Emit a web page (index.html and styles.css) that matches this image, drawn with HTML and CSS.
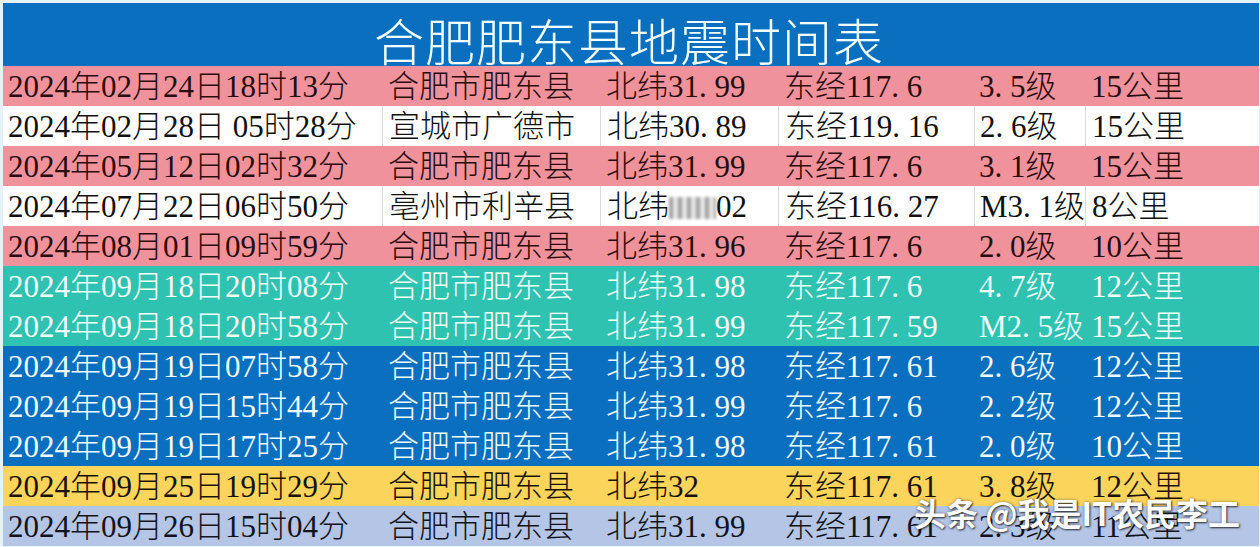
FILE: index.html
```html
<!DOCTYPE html>
<html lang="zh">
<head>
<meta charset="utf-8">
<title>合肥肥东县地震时间表</title>
<link rel="stylesheet" href="styles.css">
</head>
<body>
<div class="sheet">
  <div class="title">合肥肥东县地震时间表</div>

  <div class="row pink">
    <span>2024年02月24日18时13分</span><span>合肥市肥东县</span><span>北纬31<i>.</i>99</span><span>东经117<i>.</i>6</span><span>3<i>.</i>5级</span><span>15公里</span>
  </div>
  <div class="row white">
    <span>2024年02月28日 05时28分</span><span>宣城市广德市</span><span>北纬30<i>.</i>89</span><span>东经119<i>.</i>16</span><span>2<i>.</i>6级</span><span>15公里</span>
  </div>
  <div class="row pink">
    <span>2024年05月12日02时32分</span><span>合肥市肥东县</span><span>北纬31<i>.</i>99</span><span>东经117<i>.</i>6</span><span>3<i>.</i>1级</span><span>15公里</span>
  </div>
  <div class="row white">
    <span>2024年07月22日06时50分</span><span>亳州市利辛县</span><span>北纬<b class="blur"></b>02</span><span>东经116<i>.</i>27</span><span>M3<i>.</i>1级</span><span>8公里</span>
  </div>
  <div class="row pink">
    <span>2024年08月01日09时59分</span><span>合肥市肥东县</span><span>北纬31<i>.</i>96</span><span>东经117<i>.</i>6</span><span>2<i>.</i>0级</span><span>10公里</span>
  </div>
  <div class="row teal">
    <span>2024年09月18日20时08分</span><span>合肥市肥东县</span><span>北纬31<i>.</i>98</span><span>东经117<i>.</i>6</span><span>4<i>.</i>7级</span><span>12公里</span>
  </div>
  <div class="row teal">
    <span>2024年09月18日20时58分</span><span>合肥市肥东县</span><span>北纬31<i>.</i>99</span><span>东经117<i>.</i>59</span><span>M2<i>.</i>5级</span><span>15公里</span>
  </div>
  <div class="row blue">
    <span>2024年09月19日07时58分</span><span>合肥市肥东县</span><span>北纬31<i>.</i>98</span><span>东经117<i>.</i>61</span><span>2<i>.</i>6级</span><span>12公里</span>
  </div>
  <div class="row blue">
    <span>2024年09月19日15时44分</span><span>合肥市肥东县</span><span>北纬31<i>.</i>99</span><span>东经117<i>.</i>6</span><span>2<i>.</i>2级</span><span>12公里</span>
  </div>
  <div class="row blue">
    <span>2024年09月19日17时25分</span><span>合肥市肥东县</span><span>北纬31<i>.</i>98</span><span>东经117<i>.</i>61</span><span>2<i>.</i>0级</span><span>10公里</span>
  </div>
  <div class="row yellow">
    <span>2024年09月25日19时29分</span><span>合肥市肥东县</span><span>北纬32</span><span>东经117<i>.</i>61</span><span>3<i>.</i>8级</span><span>12公里</span>
  </div>
  <div class="row lavender">
    <span>2024年09月26日15时04分</span><span>合肥市肥东县</span><span>北纬31<i>.</i>99</span><span>东经117<i>.</i>61</span><span>2<i>.</i>3级</span><span>11公里</span>
  </div>
</div>
<div class="watermark">头条 @我是IT农民李工</div>
</body>
</html>
```

FILE: styles.css
```css
html, body {
  margin: 0;
  padding: 0;
}

body {
  width: 1260px;
  height: 547px;
  overflow: hidden;
  background: #e4f2f9;
  position: relative;
  font-family: "Liberation Serif", "Noto Sans CJK SC", serif;
}

.sheet {
  margin: 3px 0 0 3px;
  width: 1256px;
  display: flex;
  flex-direction: column;
}

.title {
  height: 63px;
  background: #0a6fbf;
  color: #f2ffff;
  font-family: "Noto Sans CJK SC", sans-serif;
  font-weight: 300;
  font-size: 50px;
  line-height: 63px;
  text-align: center;
  letter-spacing: 1px;
  padding-top: 5px;
  padding-right: 4px;
  box-sizing: border-box;
}

.row {
  height: 40px;
  display: grid;
  grid-template-columns: 379px 218px 178px 196px 111px 174px;
  align-items: center;
  font-size: 31px;
  font-weight: 300;
  line-height: 40px;
  white-space: nowrap;
}

.row span {
  padding-left: 5px;
  padding-top: 1px;
  height: 40px;
  overflow: hidden;
  box-sizing: border-box;
}

.row span:nth-child(2),
.row span:nth-child(3),
.row span:nth-child(4),
.row span:nth-child(6) {
  padding-left: 6px;
}

.row i {
  font-style: normal;
  display: inline-block;
  width: 0.5em;
}

.pink { background: #ef929c; color: #2a0c0c; }
.white { background: #ffffff; color: #111111; }
.teal { background: #30c2b1; color: #f2fffd; }
.blue { background: #0a6fbf; color: #eefcff; }
.yellow { background: #fbd45c; color: #1a1206; }
.lavender { background: #b4c5e6; color: #101420; }

.white span + span {
  border-left: 1px solid #dcdcdc;
}

.blur {
  display: inline-block;
  width: 47px;
  height: 22px;
  vertical-align: -2px;
  background: repeating-linear-gradient(90deg, #8a8a8a 0 4px, #e0e0e0 4px 9px);
  filter: blur(1.5px);
  opacity: 0.8;
}

.watermark {
  position: absolute;
  left: 914px;
  top: 492px;
  font-family: "Noto Sans CJK SC", sans-serif;
  font-weight: 700;
  font-size: 32px;
  line-height: 40px;
  color: #ffffff;
  text-shadow: 1px 1px 2px rgba(0, 0, 0, 0.7), 0 0 3px rgba(0, 0, 0, 0.4);
  white-space: nowrap;
}
```
